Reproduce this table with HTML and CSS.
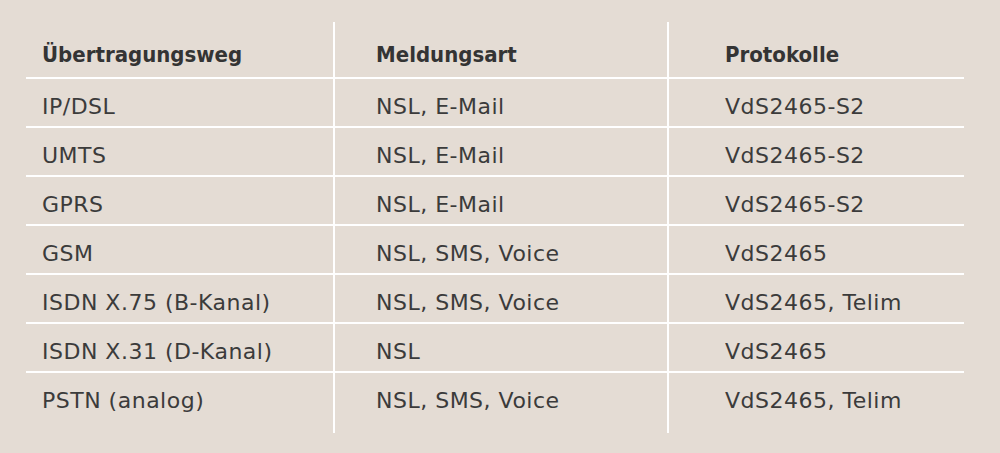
FILE: index.html
```html
<!DOCTYPE html>
<html lang="de">
<head>
<meta charset="utf-8">
<title>Übertragungswege</title>
<link rel="stylesheet" href="styles.css">
</head>
<body>
<table class="grid">
  <thead>
    <tr>
      <th class="c1">Übertragungsweg</th>
      <th class="c2">Meldungsart</th>
      <th class="c3">Protokolle</th>
    </tr>
  </thead>
  <tbody>
    <tr><td class="c1">IP/DSL</td><td class="c2">NSL, E-Mail</td><td class="c3">VdS2465-S2</td></tr>
    <tr><td class="c1">UMTS</td><td class="c2">NSL, E-Mail</td><td class="c3">VdS2465-S2</td></tr>
    <tr><td class="c1">GPRS</td><td class="c2">NSL, E-Mail</td><td class="c3">VdS2465-S2</td></tr>
    <tr><td class="c1">GSM</td><td class="c2">NSL, SMS, Voice</td><td class="c3">VdS2465</td></tr>
    <tr><td class="c1">ISDN X.75 (B-Kanal)</td><td class="c2">NSL, SMS, Voice</td><td class="c3">VdS2465, Telim</td></tr>
    <tr><td class="c1">ISDN X.31 (D-Kanal)</td><td class="c2">NSL</td><td class="c3">VdS2465</td></tr>
    <tr class="last"><td class="c1">PSTN (analog)</td><td class="c2">NSL, SMS, Voice</td><td class="c3">VdS2465, Telim</td></tr>
  </tbody>
</table>
</body>
</html>
```
FILE: styles.css
```css
html, body {
  margin: 0;
  padding: 0;
  background: #e4dcd4;
}
body {
  padding: 22px 0 0 26px;
  font-family: "DejaVu Sans", "Liberation Sans", sans-serif;
  color: #3b3b3b;
}
.grid {
  border-collapse: separate;
  border-spacing: 0;
  width: 938px;
  table-layout: fixed;
}
.grid th,
.grid td {
  box-sizing: border-box;
  text-align: left;
  font-size: 22px;
  line-height: 22px;
  white-space: nowrap;
  border-bottom: 2px solid #ffffff;
  padding: 17px 0 8px 0;
  vertical-align: top;
}
.grid th {
  font-family: "DejaVu Sans Condensed", "DejaVu Sans", sans-serif;
  font-weight: bold;
  color: #343434;
  padding-top: 22px;
  padding-bottom: 11px;
}
.grid td {
  letter-spacing: 0.5px;
}
.grid .c1 {
  width: 309px;
  padding-left: 16px;
  border-right: 2px solid #ffffff;
}
.grid .c2 {
  width: 334px;
  padding-left: 41px;
  border-right: 2px solid #ffffff;
}
.grid .c3 {
  width: 295px;
  padding-left: 56px;
}
.grid .last td {
  border-bottom: none;
  padding-bottom: 21px;
}
```
